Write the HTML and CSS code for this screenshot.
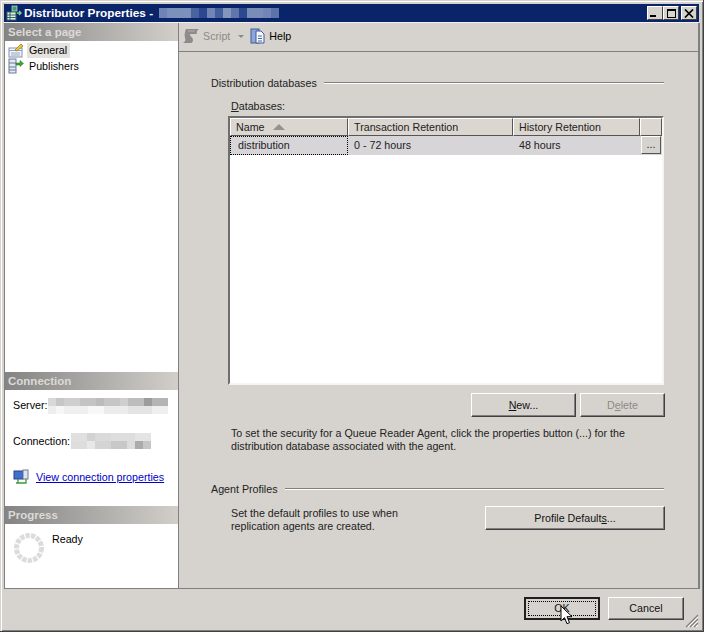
FILE: index.html
```html
<!DOCTYPE html>
<html lang="en">
<head>
<meta charset="utf-8">
<title>Distributor Properties</title>
<link rel="stylesheet" href="styles.css">
</head>
<body>
<div class="window">
  <header class="titlebar">
    <svg class="title-icon" viewBox="0 0 16 16" width="16" height="16"><rect x="1" y="7" width="9" height="8" fill="#e8ecf0" stroke="#33665a"/><path d="M1 10h9M1 12.5h9M4 7v8" stroke="#33665a"/><rect x="6" y="1" width="5" height="5" fill="#3c9a6a" stroke="#e8f4ee" stroke-width=".6"/><path d="M11 8h4M13 6l2 2-2 2" stroke="#7fd08f" fill="none" stroke-width="1.4"/></svg>
    <span class="title-text">Distributor Properties -</span>
    <span class="blur blur-title"></span>
    <div class="caption-btns">
      <span class="cap-btn"><i class="cap-min"></i></span>
      <span class="cap-btn"><i class="cap-max"></i></span>
      <span class="cap-btn cap-close"><svg viewBox="0 0 10 9" width="10" height="9"><path d="M1 0.5l8 8M9 0.5l-8 8" stroke="#000" stroke-width="1.7"/></svg></span>
    </div>
  </header>
  <div class="content">
    <aside class="sidebar">
      <h2 class="side-head">Select a page</h2>
      <ul class="pages">
        <li class="page">
          <svg viewBox="0 0 16 16" width="16" height="16"><rect x="1" y="6" width="13" height="9" fill="#f4f6fa" stroke="#8090b0"/><path d="M1 8.500h13M3 11h9M3 13h9" stroke="#8fa5c8"/><path d="M7 8l6-6 2 2-6 5z" fill="#f0c838" stroke="#8a6a20" stroke-width=".7"/></svg>
          <span class="page-label page-current">General</span>
        </li>
        <li class="page">
          <svg viewBox="0 0 16 16" width="16" height="16"><rect x="1" y="1" width="7" height="14" fill="#e4eaf2" stroke="#6a7c96"/><path d="M1 5h7M1 9h7M1 12h7" stroke="#6a7c96"/><path d="M8 5h4V2.5L15.500 5.500 12 8.500V7H8z" fill="#3aa83a" stroke="#1c6c1c" stroke-width=".5"/></svg>
          <span class="page-label">Publishers</span>
        </li>
      </ul>
      <h2 class="side-head">Connection</h2>
      <div class="conn">
        <div class="conn-row conn-server"><span class="conn-key">Server:</span><span class="blur blur-server"></span></div>
        <div class="conn-row conn-name"><span>Connection:</span><span class="blur blur-conn"></span></div>
        <div class="conn-link">
          <svg viewBox="0 0 16 16" width="16" height="16"><rect x="1" y="2" width="9" height="8" fill="#3f6fd0" stroke="#26408a"/><rect x="10" y="1" width="5" height="9" fill="#dfe5ef" stroke="#6a7c96"/><path d="M5 10v4h8v-4M3 14h4" stroke="#3a9a3a" fill="none" stroke-width="1.3"/></svg>
          <a href="#" class="link">View connection properties</a>
        </div>
      </div>
      <h2 class="side-head">Progress</h2>
      <div class="progress">
        <svg class="spinner" viewBox="0 0 32 32" width="32" height="32"><circle cx="16" cy="16" r="12.500" fill="none" stroke="#dcdcdc" stroke-width="5" stroke-dasharray="4.300 1.200"/></svg>
        <span>Ready</span>
      </div>
    </aside>
    <main class="main">
      <div class="toolbar">
        <span class="tool tool-off">
          <svg viewBox="0 0 18 16" width="18" height="16"><path d="M4 1h13c-2 1-3 3-2 5H8c0 3 3 3 3 6 0 1-1 3-2 3H1c2-1 3-3 2-5-1-3 0-7 1-9z" fill="#8c8c8c"/><path d="M6 3h7" stroke="#b0b0b0"/></svg>
          Script
          <i class="drop"></i>
        </span>
        <span class="tool">
          <svg viewBox="0 0 16 16" width="16" height="16"><rect x="1" y="1" width="8" height="14" fill="#8ea6d8" stroke="#3e5a98"/><path d="M6 3h5l3 3v9H6z" fill="#f6f8fc" stroke="#3e5a98"/><path d="M8 8h4M8 10.500h4M8 13h4" stroke="#4a6aa8"/></svg>
          Help
        </span>
      </div>
      <section class="pane">
        <div class="group-title"><span>Distribution databases</span><i class="rule"></i></div>
        <div class="indent">
          <label class="db-label"><u>D</u>atabases:</label>
          <div class="grid">
            <div class="grid-row grid-head">
              <div class="th th-name">Name <i class="sort"></i></div>
              <div class="th">Transaction Retention</div>
              <div class="th">History Retention</div>
              <div class="th"></div>
            </div>
            <div class="grid-row grid-data">
              <div class="td td-focus">distribution</div>
              <div class="td">0 - 72 hours</div>
              <div class="td">48 hours</div>
              <div class="td td-btn"><span class="dots-btn">...</span></div>
            </div>
          </div>
        </div>
        <div class="db-actions">
          <button class="btn btn-new" type="button"><u>N</u>ew...</button>
          <button class="btn btn-del" type="button" disabled>D<u>e</u>lete</button>
        </div>
        <p class="note">To set the security for a Queue Reader Agent, click the properties button (...) for the<br>distribution database associated with the agent.</p>
        <div class="group-title group-agent"><span>Agent Profiles</span><i class="rule"></i></div>
        <div class="agent-row">
          <p class="agent-text">Set the default profiles to use when<br>replication agents are created.</p>
          <button class="btn btn-profile" type="button">Profile Default<u>s</u>...</button>
        </div>
      </section>
    </main>
  </div>
  <footer class="footer">
    <button class="btn btn-foot btn-ok" type="button"><span class="ok-inner">OK</span>
      <svg class="cursor" viewBox="0 0 13 20" width="13" height="20"><path d="M1 1v15l3.500-3.300 2.500 6 2.500-1-2.500-6h5z" fill="#fff" stroke="#000"/></svg>
    </button>
    <button class="btn btn-foot btn-cancel" type="button">Cancel</button>
    <svg class="grip" viewBox="0 0 14 14" width="14" height="14"><path d="M13 1L1 13M13 5L5 13M13 9L9 13" stroke="#808080" stroke-width="1.200"/><path d="M13 3L3 13M13 7L7 13M13 11L11 13" stroke="#fff"/></svg>
  </footer>
</div>
</body>
</html>
```

FILE: styles.css
```css
* { box-sizing: border-box; }
html, body { margin: 0; padding: 0; }
body {
  width: 704px;
  height: 632px;
  overflow: hidden;
  font-family: "Liberation Sans", Arial, sans-serif;
  font-size: 10.7px;
  color: #000;
  background: #d6d3ce;
}
h2, p, ul { margin: 0; padding: 0; }
ul { list-style: none; }

.window {
  width: 704px;
  height: 632px;
  background: #d6d3ce;
  display: flex;
  flex-direction: column;
  padding: 4px 3px 2px 4px;
  border-right: 1px solid #404040;
  border-bottom: 1px solid #404040;
  box-shadow: inset 1px 1px 0 #d6d3ce, inset 2px 2px 0 #fff, inset -1px -1px 0 #808080;
}

/* title bar */
.titlebar {
  height: 18px;
  flex: none;
  margin-right: 1px;
  background: #0a246a;
  color: #fff;
  display: flex;
  align-items: center;
  padding: 0 2px 0 2px;
  font-weight: bold;
  font-size: 11.8px;
  box-shadow: 0 1px 0 #f4f2ee;
}
.title-icon { flex: none; margin-right: 2px; }
.title-text { white-space: nowrap; }
.blur { display: inline-block; flex: none; }
.blur-title {
  width: 120px;
  height: 10px;
  margin-left: 6px;
  background: linear-gradient(90deg,
    #6f84b4 0 8px, #7c90bc 8px 32px, #4a639f 32px 40px, #2c488e 40px 48px, #7385b4 48px 56px,
    #42609e 56px 64px, #8596bc 64px 72px, #6076aa 72px 80px, #2c488e 80px 88px,
    #7a8cb8 88px 104px, #7385b4 104px 112px, #5c74aa 112px 120px);
}
.caption-btns { margin-left: auto; display: flex; align-items: center; gap: 0; }
.cap-btn {
  width: 16px;
  height: 14px;
  background: #d6d3ce;
  border: 1px solid;
  border-color: #fff #404040 #404040 #fff;
  display: flex;
  align-items: center;
  justify-content: center;
  position: relative;
}
.cap-close { margin-left: 2px; }
.cap-min { width: 6px; height: 2px; background: #000; margin: 6px 5px 0 0; }
.cap-max { width: 9px; height: 9px; border: 1px solid #000; border-top-width: 2px; }

/* main split */
.content { flex: none; height: 566px; margin-top: 1px; display: flex; border-bottom: 1px solid #808080; }
.sidebar {
  width: 175px;
  flex: none;
  background: #fff;
  border-left: 1px solid #808080;
  border-right: 1px solid #808080;
  display: flex;
  flex-direction: column;
}
.side-head {
  height: 18px;
  flex: none;
  font-size: 11.5px;
  line-height: 18px;
  padding-left: 3px;
  color: #dcdad6;
  font-weight: bold;
  background: linear-gradient(90deg, #848484, #d2cfca);
}
.pages { height: 331px; flex: none; padding: 1px 0 0 3px; }
.page { display: flex; align-items: center; height: 16px; gap: 4px; }
.page-label { padding: 0 3px 0 2px; line-height: 15px; margin-left: -1px; }
.page-current { background: #e4e2de; }

.conn { height: 116px; flex: none; padding: 0 0 0 8px; }
.conn-row { display: flex; align-items: center; }
.conn-server { padding-top: 7px; height: 25px; }
.conn-key { padding-bottom: 2px; }
.conn-name { margin-top: 17px; height: 18px; }
.conn-link { display: flex; align-items: center; gap: 7px; margin-top: 19px; }
.blur-server {
  width: 120px;
  height: 16px;
  margin-left: 1px;
  background:
    linear-gradient(90deg, #d8d8d8 0 8px, #c6c6c6 8px 16px, #cfcfcf 16px 32px, #c4c4c4 32px 48px, #bcbcbc 48px 56px, #c6c6c6 56px 72px, #cfcfcf 72px 80px, #bdbdbd 80px 96px, #9c9c9c 96px 104px, #b4b4b4 104px 120px) 0 0 / 100% 50% no-repeat,
    linear-gradient(90deg, #eeeeee 0 8px, #f7f7f7 8px 16px, #f0f0f0 16px 40px, #f8f8f8 40px 56px, #ececec 56px 80px, #e4e4e4 80px 104px, #efefef 104px 120px) 0 100% / 100% 50% no-repeat;
}
.blur-conn {
  width: 80px;
  height: 16px;
  margin-left: 1px;
  background:
    linear-gradient(90deg, #e0e0e0 0 16px, #d2d2d2 16px 24px, #dadada 24px 40px, #dddddd 40px 64px, #e4e4e4 64px 80px) 0 0 / 100% 50% no-repeat,
    linear-gradient(90deg, #dddddd 0 16px, #e8e8e8 16px 24px, #d4d4d4 24px 40px, #c8c8c8 40px 56px, #dcdcdc 56px 64px, #ababab 64px 72px, #c6c6c6 72px 80px) 0 100% / 100% 50% no-repeat;
}
.link { color: #0000c8; text-decoration: underline; }
.progress { flex: 1; display: flex; align-items: flex-start; padding: 8px 0 0 8px; gap: 7px; }
.progress span { padding-top: 1px; }
.spinner { flex: none; }

/* main */
.main { flex: 1; min-width: 0; display: flex; flex-direction: column; border-right: 2px solid #808080; }
.toolbar {
  height: 29px;
  flex: none;
  border-bottom: 1px solid #808080;
  display: flex;
  align-items: center;
  padding: 0 0 2px 3px;
  gap: 6px;
}
.tool { display: flex; align-items: center; gap: 3px; }
.tool-off { color: #8c8a86; }
.drop { width: 0; height: 0; margin-left: 5px; border: 3px solid transparent; border-top: 3px solid #8c8a86; border-bottom: 0; }
.pane { flex: 1; padding: 23px 34px 0 32px; display: flex; flex-direction: column; }
.group-title { display: flex; align-items: center; gap: 7px; height: 16px; color: #222; }
.rule { flex: 1; height: 2px; border-top: 1px solid #808080; border-bottom: 1px solid #fff; }
.indent { padding-left: 17px; margin-top: 8px; }
.db-label { display: block; height: 17px; line-height: 15px; color: #222; padding-left: 3px; }
.grid {
  height: 269px;
  background: #fff;
  border: 2px solid;
  border-color: #6e6e6e #f6f5f2 #f6f5f2 #6e6e6e;
}
.grid-row { display: grid; grid-template-columns: 118px 165px 127px 1fr; }
.grid-head { height: 18px; }
.th {
  background: #dcd6d0;
  border: 1px solid;
  border-color: #fff #555 #555 #fff;
  padding-left: 5px;
  line-height: 16px;
  color: #222;
  white-space: nowrap;
}
.th-name { display: flex; align-items: center; gap: 8px; }
.sort { width: 0; height: 0; border: 6px solid transparent; border-top: 0; border-bottom: 6px solid #98908c; }
.grid-data { height: 19px; background: #d8d5d8; }
.td { padding-left: 6px; line-height: 18px; white-space: nowrap; color: #222; }
.td-focus { border: 1px dotted #000; padding-left: 7px; line-height: 17px; }
.td-btn { padding: 0 0 0 1px; }
.dots-btn {
  display: block;
  width: 20px;
  height: 18px;
  background: #d6d3ce;
  border: 1px solid;
  border-color: #fff #555 #555 #fff;
  text-align: center;
  line-height: 15px;
}
.btn {
  font: inherit;
  color: #111;
  background: #d6d3ce;
  border: 1px solid;
  border-color: #fff #404040 #404040 #fff;
  box-shadow: inset -1px -1px 0 #808080;
  padding: 0;
  height: 24px;
}
.db-actions { display: flex; justify-content: flex-end; gap: 4px; margin: 8px -1px 0 0; }
.btn-new { width: 105px; }
.btn-del { width: 85px; color: #8c8a86; }
.note { margin: 10px 0 0 20px; line-height: 13px; color: #222; }
.group-agent { margin-top: 28px; }
.agent-row { display: flex; justify-content: space-between; align-items: flex-start; padding-left: 20px; margin: 9px -1px 0 0; }
.agent-text { line-height: 13px; padding-top: 1px; color: #222; }
.btn-profile { width: 180px; height: 24px; }

/* footer */
.footer { flex: 1; position: relative; display: flex; justify-content: flex-end; align-items: flex-start; gap: 8px; padding: 8px 16px 0 0; }
.btn-foot { width: 76px; height: 23px; }
.btn-cancel { padding-bottom: 2px; }
.btn-ok {
  position: relative;
  border: 2px solid #202020;
  box-shadow: none;
  padding: 2px;
}
.ok-inner { display: block; height: 15px; line-height: 13px; border: 1px dotted #000; }
.cursor { position: absolute; left: 34px; top: 6px; }
.grip { position: absolute; right: 1px; bottom: 1px; }
```
